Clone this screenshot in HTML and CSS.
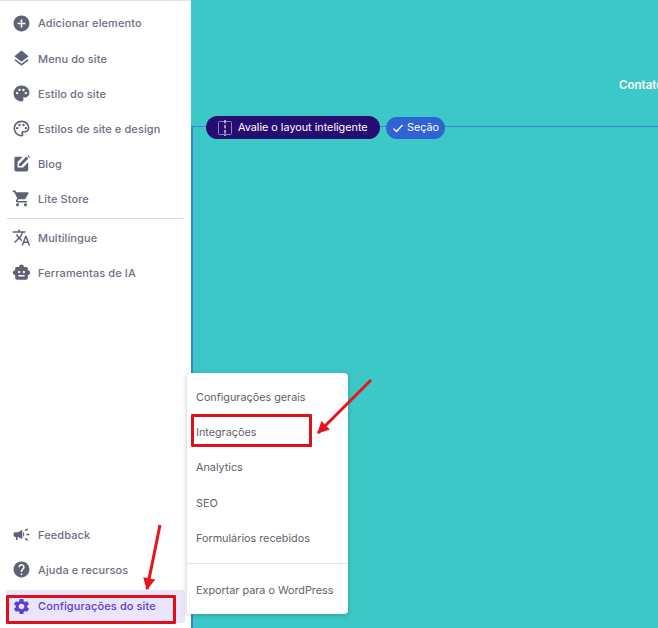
FILE: index.html
```html
<!DOCTYPE html>
<html lang="pt">
<head>
<meta charset="utf-8">
<title>Configurações do site</title>
<link rel="stylesheet" href="styles.css">
</head>
<body>
<svg width="0" height="0" class="defs">
  <defs>
    <marker id="head" viewBox="0 0 10 10" refX="9" refY="5" markerWidth="5" markerHeight="4" orient="auto" markerUnits="strokeWidth"><path d="M0 0L10 5L0 10Z" fill="#e8141c"/></marker>
  </defs>
</svg>
<div class="app">
  <aside class="sidebar">
    <nav class="nav">
      <a class="item item-first"><svg class="ico" viewBox="0 0 24 24"><path d="M12 2C6.48 2 2 6.48 2 12s4.48 10 10 10 10-4.48 10-10S17.52 2 12 2zm5 11h-4v4h-2v-4H7v-2h4V7h2v4h4v2z"/></svg><span>Adicionar elemento</span></a>
      <a class="item"><svg class="ico" viewBox="0 0 24 24"><path d="M11.99 18.54l-7.37-5.73L3 14.07l9 7 9-7-1.63-1.27-7.38 5.74zM12 16l7.36-5.73L21 9l-9-7-9 7 1.63 1.27L12 16z"/></svg><span>Menu do site</span></a>
      <a class="item"><svg class="ico" viewBox="0 0 24 24"><path d="M12 2C6.49 2 2 6.49 2 12s4.49 10 10 10c1.38 0 2.5-1.12 2.5-2.5 0-.61-.23-1.2-.64-1.67-.08-.1-.13-.21-.13-.33 0-.28.22-.5.5-.5H16c3.31 0 6-2.69 6-6 0-4.96-4.49-9-10-9zm-5.5 11c-.83 0-1.5-.67-1.5-1.5S5.67 10 6.5 10s1.5.67 1.5 1.5S7.33 13 6.5 13zm3-4C8.67 9 8 8.33 8 7.5S8.67 6 9.5 6s1.5.67 1.5 1.5S10.33 9 9.5 9zm5 0c-.83 0-1.5-.67-1.5-1.5S13.67 6 14.5 6s1.5.67 1.5 1.5S15.33 9 14.5 9zm3 4c-.83 0-1.5-.67-1.5-1.5s.67-1.5 1.5-1.5 1.5.67 1.5 1.5-.67 1.5-1.5 1.5z"/></svg><span>Estilo do site</span></a>
      <a class="item"><svg class="ico" viewBox="0 0 24 24"><path d="M12 22C6.49 22 2 17.51 2 12S6.49 2 12 2s10 4.04 10 9c0 3.31-2.69 6-6 6h-1.77c-.28 0-.5.22-.5.5 0 .12.05.23.13.33.41.47.64 1.06.64 1.67 0 1.38-1.12 2.5-2.5 2.5zm0-18c-4.41 0-8 3.59-8 8s3.59 8 8 8c.28 0 .5-.22.5-.5 0-.16-.08-.28-.14-.35-.41-.46-.63-1.05-.63-1.65 0-1.38 1.12-2.5 2.5-2.5H16c2.21 0 4-1.79 4-4 0-3.86-3.59-7-8-7z"/><circle cx="6.5" cy="11.5" r="1.5"/><circle cx="9.5" cy="7.5" r="1.5"/><circle cx="14.5" cy="7.5" r="1.5"/><circle cx="17.5" cy="11.5" r="1.5"/></svg><span>Estilos de site e design</span></a>
      <a class="item"><svg class="ico" viewBox="0 0 24 24"><path d="M3 5.5C3 4.400 3.900 3.500 5 3.500h8.500l-6.500 6.500V17h7l6.500-6.500V20c0 1.100-.9 2-2 2H5c-1.100 0-2-.9-2-2z"/><path d="M9 12.500L18.200 3.300l2.500 2.500L11.500 15H9z"/><path d="M19.400 2.100l.9-.9 2.500 2.500-.9.9z"/></svg><span>Blog</span></a>
      <a class="item"><svg class="ico" viewBox="0 0 24 24"><path d="M7 18c-1.1 0-1.99.9-1.99 2S5.9 22 7 22s2-.9 2-2-.9-2-2-2zM1 2v2h2l3.6 7.59-1.35 2.45c-.16.28-.25.61-.25.96 0 1.1.9 2 2 2h12v-2H7.42c-.14 0-.25-.11-.25-.25l.03-.12.9-1.63h7.45c.75 0 1.41-.41 1.75-1.03l3.58-6.49c.08-.14.12-.31.12-.48 0-.55-.45-1-1-1H5.21l-.94-2H1zm16 16c-1.1 0-1.99.9-1.99 2s.89 2 1.99 2 2-.9 2-2-.9-2-2-2z"/></svg><span>Lite Store</span></a>
      <hr class="rule">
      <a class="item"><svg class="ico" viewBox="0 0 24 24"><path d="M12.87 15.07l-2.54-2.51.03-.03c1.74-1.94 2.98-4.17 3.71-6.53H17V4h-7V2H8v2H1v1.99h11.17C11.5 7.92 10.44 9.75 9 11.35 8.07 10.32 7.3 9.19 6.69 8h-2c.73 1.63 1.73 3.17 2.98 4.56l-5.09 5.02L4 19l5-5 3.11 3.11.76-2.04zM18.5 10h-2L12 22h2l1.12-3h4.75L21 22h2l-4.5-12zm-2.62 7l1.62-4.33L19.12 17h-3.24z"/></svg><span>Multilíngue</span></a>
      <a class="item"><svg class="ico" viewBox="0 0 24 24"><path d="M20 9V7c0-1.1-.9-2-2-2h-3c0-1.66-1.34-3-3-3S9 3.34 9 5H6c-1.1 0-2 .9-2 2v2c-1.66 0-3 1.34-3 3s1.34 3 3 3v4c0 1.1.9 2 2 2h12c1.1 0 2-.9 2-2v-4c1.66 0 3-1.34 3-3s-1.34-3-3-3zM7.500 11.5c0-.83.67-1.5 1.5-1.5s1.5.67 1.5 1.5S9.83 13 9 13s-1.5-.67-1.5-1.5zM16 17H8v-2h8v2zm-1-4c-.83 0-1.5-.67-1.5-1.5S14.17 10 15 10s1.5.67 1.5 1.5S15.83 13 15 13z"/></svg><span>Ferramentas de IA</span></a>
    </nav>
    <nav class="nav nav-bottom">
      <a class="item"><svg class="ico" viewBox="0 0 24 24"><path d="M18 11v2h4v-2h-4zm-2 6.61c.96.71 2.21 1.65 3.2 2.39.4-.53.8-1.07 1.2-1.6-.99-.74-2.24-1.68-3.2-2.4-.4.54-.8 1.08-1.2 1.61zM20.4 5.6c-.4-.53-.8-1.07-1.2-1.6-.99.74-2.24 1.68-3.2 2.4.4.53.8 1.07 1.2 1.6.96-.72 2.21-1.65 3.2-2.4zM4 9c-1.1 0-2 .9-2 2v2c0 1.1.9 2 2 2h1v4h2v-4h1l5 3V6L8 9H4zm11.5 3c0-1.33-.58-2.53-1.5-3.35v6.69c.92-.81 1.5-2.01 1.500-3.34z"/></svg><span>Feedback</span></a>
      <a class="item"><svg class="ico" viewBox="0 0 24 24"><path d="M12 2C6.48 2 2 6.48 2 12s4.48 10 10 10 10-4.48 10-10S17.52 2 12 2zm1 17h-2v-2h2v2zm2.07-7.75l-.9.92C13.45 12.9 13 13.5 13 15h-2v-.5c0-1.1.45-2.1 1.17-2.83l1.24-1.26c.37-.36.59-.86.59-1.41 0-1.1-.9-2-2-2s-2 .9-2 2H8c0-2.21 1.79-4 4-4s4 1.79 4 4c0 .88-.36 1.68-.93 2.25z"/></svg><span>Ajuda e recursos</span></a>
      <a class="item item-active"><svg class="ico" viewBox="0 0 24 24"><path d="M19.14 12.94c.04-.3.06-.61.06-.94 0-.32-.02-.64-.07-.94l2.03-1.58c.18-.14.23-.41.12-.61l-1.92-3.32c-.12-.22-.37-.29-.59-.22l-2.39.96c-.5-.38-1.03-.7-1.62-.94l-.36-2.54c-.04-.24-.24-.41-.48-.41h-3.84c-.24 0-.43.17-.47.41l-.36 2.54c-.59.24-1.13.57-1.62.94l-2.39-.96c-.22-.08-.47 0-.59.22L2.74 8.87c-.12.21-.08.47.12.61l2.03 1.58c-.05.3-.09.63-.09.94s.02.64.07.94l-2.03 1.58c-.18.14-.23.41-.12.61l1.92 3.32c.12.22.37.29.59.22l2.39-.96c.5.38 1.03.7 1.62.94l.36 2.54c.05.24.24.41.48.41h3.84c.24 0 .44-.17.47-.41l.36-2.54c.59-.24 1.13-.56 1.62-.94l2.39.96c.22.08.47 0 .59-.22l1.92-3.32c.12-.22.07-.47-.12-.61l-2.01-1.58zM12 15.6c-1.98 0-3.6-1.62-3.6-3.6s1.62-3.6 3.6-3.6 3.6 1.62 3.6 3.6-1.62 3.6-3.6 3.6z"/></svg><span>Configurações do site</span></a>
    </nav>
  </aside>
  <main class="canvas">
    <header class="hero"><span class="hero-link">Contato</span></header>
    <section class="section"></section>
  </main>
</div>

<div class="badges">
  <div class="badge badge-dark">
    <svg class="badge-ico" viewBox="0 0 16 16"><rect x="1.500" y="1.500" width="13" height="13" rx="1" fill="none" stroke="#8f7fc8" stroke-width="1"/><path d="M8 0V16" stroke="#e4def5" stroke-width="1.300" stroke-dasharray="3.500 1.500" fill="none"/></svg>
    <span>Avalie o layout inteligente</span>
  </div>
  <div class="badge badge-blue">
    <svg class="check" viewBox="0 0 12 12"><path d="M1.500 6.500L4.500 9.500L10.500 3" fill="none" stroke="#fff" stroke-width="1.300"/></svg>
    <span>Seção</span>
  </div>
</div>

<div class="menu">
  <a class="menu-item">Configurações gerais</a>
  <a class="menu-item">Integrações</a>
  <a class="menu-item">Analytics</a>
  <a class="menu-item">SEO</a>
  <a class="menu-item">Formulários recebidos</a>
  <hr class="menu-rule">
  <a class="menu-item">Exportar para o WordPress</a>
</div>

<div class="mark mark-menu"></div>
<div class="mark mark-side"></div>
<svg class="arrows" viewBox="0 0 658 628">
  <line x1="371" y1="380" x2="318" y2="433" class="arrow" marker-end="url(#head)"/>
  <line x1="160" y1="525" x2="147" y2="589" class="arrow" marker-end="url(#head)"/>
</svg>
</body>
</html>
```

FILE: styles.css
```css
* { box-sizing: border-box; }
html, body { margin: 0; height: 100%; }
body {
  position: relative;
  width: 658px;
  height: 628px;
  overflow: hidden;
  font-family: Inter, "Liberation Sans", sans-serif;
  background: #3cc8c6;
}
.defs { position: absolute; }
.app { display: flex; height: 628px; }

.sidebar {
  width: 191px;
  flex: none;
  display: flex;
  flex-direction: column;
  justify-content: space-between;
  background: #fff;
  border-top: 1px solid #e2e2e6;
  padding: 4px 6px 5px;
}
.nav { display: flex; flex-direction: column; }
.item {
  display: flex;
  align-items: center;
  gap: 7px;
  height: 35px;
  padding-left: 6px;
  color: #6d6f82;
  font-size: 11px;
  font-weight: 500;
  letter-spacing: .1px;
}
.item-first { height: 36px; }
.ico { width: 19px; height: 19px; flex: none; fill: #5f6176; }
.rule { width: 177px; height: 1px; margin: 2px 0 1px 1px; border: 0; background: #dcdde2; }
.item-active {
  height: 33px;
  margin-top: 3px;
  width: 179px;
  border-radius: 3px;
  background: #ebe5fb;
  color: #5a3fd0;
  padding-bottom: 1px;
}
.item-active .ico { fill: #5a3fd0; }

.canvas { flex: 1; display: flex; flex-direction: column; min-width: 0; }
.hero { height: 126px; overflow: hidden; }
.hero-link {
  display: block;
  margin: 78px 0 0 428px;
  color: #fff;
  font-size: 11.500px;
  font-weight: 600;
  white-space: nowrap;
}
.section { flex: 1; border-top: 1px solid #3d82d9; border-left: 2px solid #3d82d9; }

.badges { position: absolute; left: 206px; top: 116px; display: flex; align-items: center; gap: 6px; }
.badge {
  display: flex;
  align-items: center;
  color: #fff;
  font-size: 10.800px;
  font-weight: 400;
  border-radius: 12px;
  white-space: nowrap;
}
.badge-dark { width: 174px; height: 23px; padding-left: 11px; gap: 5px; background: #260d72; }
.badge-blue { width: 59px; height: 22px; padding-left: 6px; gap: 3px; background: #2f63d4; }
.badge-ico { width: 16px; height: 16px; flex: none; }
.check { width: 12px; height: 12px; flex: none; }

.menu {
  position: absolute;
  left: 187px;
  top: 373px;
  width: 161px;
  height: 241px;
  background: #fff;
  border-radius: 4px;
  box-shadow: 0 1px 5px rgba(30, 40, 60, .28);
  padding-top: 7px;
}
.menu-item {
  display: flex;
  align-items: center;
  height: 35.200px;
  padding-left: 9px;
  color: #5f616b;
  font-size: 10.800px;
  font-weight: 400;
  white-space: nowrap;
}
.menu-rule { height: 1px; margin: 7px 0 9px; border: 0; background: #e4e4e8; }

.mark { position: absolute; border: 3px solid #e0101a; border-radius: 1px; }
.mark-menu { left: 191px; top: 414px; width: 121px; height: 33px; }
.mark-side { left: 6px; top: 595px; width: 170px; height: 29px; }

.arrows { position: absolute; left: 0; top: 0; width: 658px; height: 628px; pointer-events: none; }
.arrow { stroke: #e8141c; stroke-width: 3; fill: none; }
```
